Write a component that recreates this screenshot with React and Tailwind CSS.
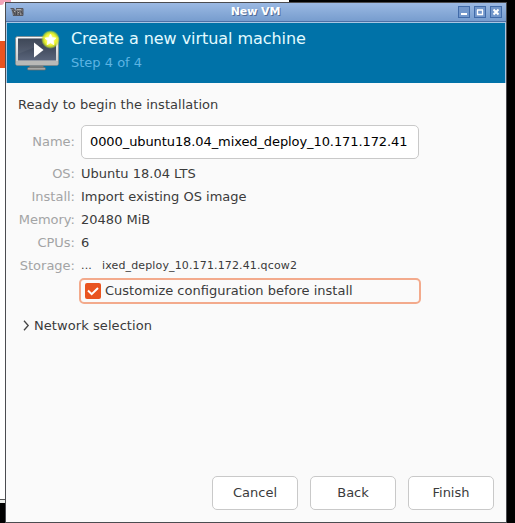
const details = [
  { label: "OS:", value: "Ubuntu 18.04 LTS" },
  { label: "Install:", value: "Import existing OS image" },
  { label: "Memory:", value: "20480 MiB" },
  { label: "CPUs:", value: "6" },
];

function VmLogo() {
  return (
    <svg width="22" height="18" viewBox="0 0 22 18" className="shrink-0">
      <path d="M4 5h3l1.500 2 1.500-2h6v8h-10z" fill="#77777c" />
      <path d="M3.500 5.500h3l2 6M9 5.500h7v7M6 12.500h10" stroke="#55565e" fill="none" />
      <path d="M5.500 7l2.500 5M9.500 8v4M11.500 8l1 4M14 8l1.500 3" stroke="#45464b" fill="none" />
      <path d="M7 8.500h1M11 9.500h1M13 11h1M10 6.500h4" stroke="#b0aeaa" />
    </svg>
  );
}

function MonitorIcon() {
  return (
    <svg width="48" height="48" viewBox="0 0 48 48" className="shrink-0">
      <defs>
        <linearGradient id="frame" x1="0" y1="0" x2="0" y2="1">
          <stop offset="0" stopColor="#fafafa" />
          <stop offset="1" stopColor="#c2c3c3" />
        </linearGradient>
        <linearGradient id="screen" x1="0" y1="0" x2="0" y2="1">
          <stop offset="0" stopColor="#333c4d" />
          <stop offset="0.5" stopColor="#454f62" />
          <stop offset="1" stopColor="#5a657b" />
        </linearGradient>
        <radialGradient id="glow">
          <stop offset="0" stopColor="#ffffd0" />
          <stop offset="0.6" stopColor="#f0f42c" />
          <stop offset="0.8" stopColor="#cfe42c" stopOpacity="0.8" />
          <stop offset="1" stopColor="#8fbf45" stopOpacity="0" />
        </radialGradient>
      </defs>
      <path d="M16 38h13l1 3h-15z" fill="#777b7d" />
      <rect x="13.500" y="40.500" width="18" height="2.500" rx="1" fill="#a8a8a6" stroke="#6b6b69" strokeWidth="0.700" />
      <rect x="1.500" y="9.500" width="43" height="29" rx="2" fill="url(#frame)" stroke="#7c8588" strokeWidth="0.800" />
      <path d="M2 34h42v3q0 1-1.500 1h-39q-1.500 0-1.500-1z" fill="#b9b9b7" />
      <rect x="4" y="11.500" width="38" height="22" fill="url(#screen)" />
      <path d="M4 12h37L4 27z" fill="#fff" opacity="0.060" />
      <path d="M20 15.500v15l9.500-7.500z" fill="#fff" />
      <circle cx="36.500" cy="12.500" r="9.500" fill="url(#glow)" />
      <path d="M36.500 7l1.700 3.600 3.900.500-2.800 2.700.6 3.900-3.400-1.900-3.400 1.900.6-3.900-2.800-2.700 3.900-.500z" fill="#fff" stroke="#fffff0" strokeWidth="0.800" strokeLinejoin="round" />
    </svg>
  );
}

function WindowControl({ children }) {
  return (
    <div className="h-3 w-3 border border-[#416ba9] bg-[#7297cb]">
      <svg width="10" height="10" viewBox="0 0 10 10" fill="none" stroke="#fff">{children}</svg>
    </div>
  );
}

function TitleBar() {
  return (
    <div className="flex h-[19px] shrink-0 items-center border-b border-[#4d70a6] bg-linear-to-b from-[#9bb9e3] to-[#779dce] pr-[4px] pl-px">
      <div className="w-[42px]"><VmLogo /></div>
      <div className="flex-1 pl-[4px] text-center text-[11px] leading-4 font-bold tracking-[-0.1px] text-white [text-shadow:1px_1px_0_#526d97]">New VM</div>
      <div className="flex gap-1">
        <WindowControl><path d="M2 7h6" strokeWidth="2" /></WindowControl>
        <WindowControl><path d="M2.500 3v4.500h5V3M2 3h6" strokeWidth="1.300" /></WindowControl>
        <WindowControl><path d="M2.500 2.500l5 5M7.500 2.500l-5 5" strokeWidth="2" /></WindowControl>
      </div>
    </div>
  );
}

function DetailRow({ label, children }) {
  return (
    <div className="flex h-[23px] items-center">
      <div className="w-[57px] text-right text-[#a3a4a5]">{label}</div>
      <div className="pl-[6px]">{children}</div>
    </div>
  );
}

function Button({ children }) {
  return (
    <button className="h-[34px] w-[86px] rounded-[5px] border border-[#c9c9c9] bg-white text-center">{children}</button>
  );
}

export default function App() {
  return (
    <div className="flex h-[523px] w-[515px] flex-col overflow-hidden bg-black font-['DejaVu_Sans',sans-serif] text-[13px] leading-4 whitespace-nowrap text-[#3b3b3b]">
      <div className="flex h-[2px] shrink-0">
        <div className="w-[11px] bg-[#f2a3b8]" />
        <div className="w-[278px] bg-white" />
      </div>
      <div className="flex min-h-0 flex-1">
        <div className="flex w-[5px] shrink-0 flex-col bg-white">
          <div className="h-[3px] w-[4px] rounded-br bg-[#f2a3b8]" />
          <div className="mt-9 h-[27px] bg-[#e95420]" />
          <div className="mt-auto h-px bg-[#555]" />
          <div className="h-[3px] bg-[#e9ece9]" />
          <div className="h-5 bg-black" />
        </div>
        <div className="flex w-[502px] flex-col border border-[#4b4c50] bg-[#fafafa]">
          <TitleBar />
          <div className="flex h-[61px] shrink-0 border-t border-r border-l border-[#a9c6e3] bg-[#0072a8] pl-[7px]">
            <div className="pt-[4px]"><MonitorIcon /></div>
            <div className="pl-[9px]">
              <h1 className="pt-[6px] text-[16px] leading-5 tracking-[-0.05px] text-[#e3fbff]">Create a new virtual machine</h1>
              <p className="pt-[6px] text-[#5db4e3]">Step 4 of 4</p>
            </div>
          </div>
          <main className="flex flex-1 flex-col pr-[12px] pb-[12px] pl-[12px]">
            <h2 className="pt-[14px] tracking-[0.03px]">Ready to begin the installation</h2>
            <div className="mt-[12px] mb-[3px] flex h-[34px] items-center">
              <div className="w-[57px] text-right text-[#a3a4a5]">Name:</div>
              <div className="ml-[6px] flex h-[34px] w-[338px] items-center rounded-[5px] border border-[#c9c9c9] bg-white pl-[8px] tracking-[-0.09px] text-black">0000_ubuntu18.04_mixed_deploy_10.171.172.41</div>
            </div>
            {details.map((row) => (
              <DetailRow key={row.label} label={row.label}>{row.value}</DetailRow>
            ))}
            <DetailRow label="Storage:">
              <div className="flex text-[11px] tracking-[0.14px]"><span className="w-[21px]">...</span><span>ixed_deploy_10.171.172.41.qcow2</span></div>
            </DetailRow>
            <label className="mt-px ml-[61px] flex h-[26px] w-[342px] items-center rounded-[5px] border-2 border-[#f3aa8c] pl-[4px]">
              <span className="flex h-4 w-4 items-center justify-center rounded-[2px] bg-[#e95420]">
                <svg width="16" height="16" viewBox="0 0 16 16" fill="none" stroke="#fff" strokeWidth="2"><path d="M3 7.500l3.700 3.700L13 5" /></svg>
              </span>
              <span className="pl-1">Customize configuration before install</span>
            </label>
            <div className="mt-[14px] flex items-center">
              <svg width="16" height="16" viewBox="0 0 16 16" fill="none" stroke="#444" strokeWidth="1.300"><path d="M6 2.800l4.200 4.700L6 12.200" /></svg>
              <span className="tracking-[0.07px]">Network selection</span>
            </div>
            <div className="mt-auto flex justify-end gap-3">
              <Button>Cancel</Button>
              <Button>Back</Button>
              <Button>Finish</Button>
            </div>
          </main>
        </div>
      </div>
    </div>
  );
}
